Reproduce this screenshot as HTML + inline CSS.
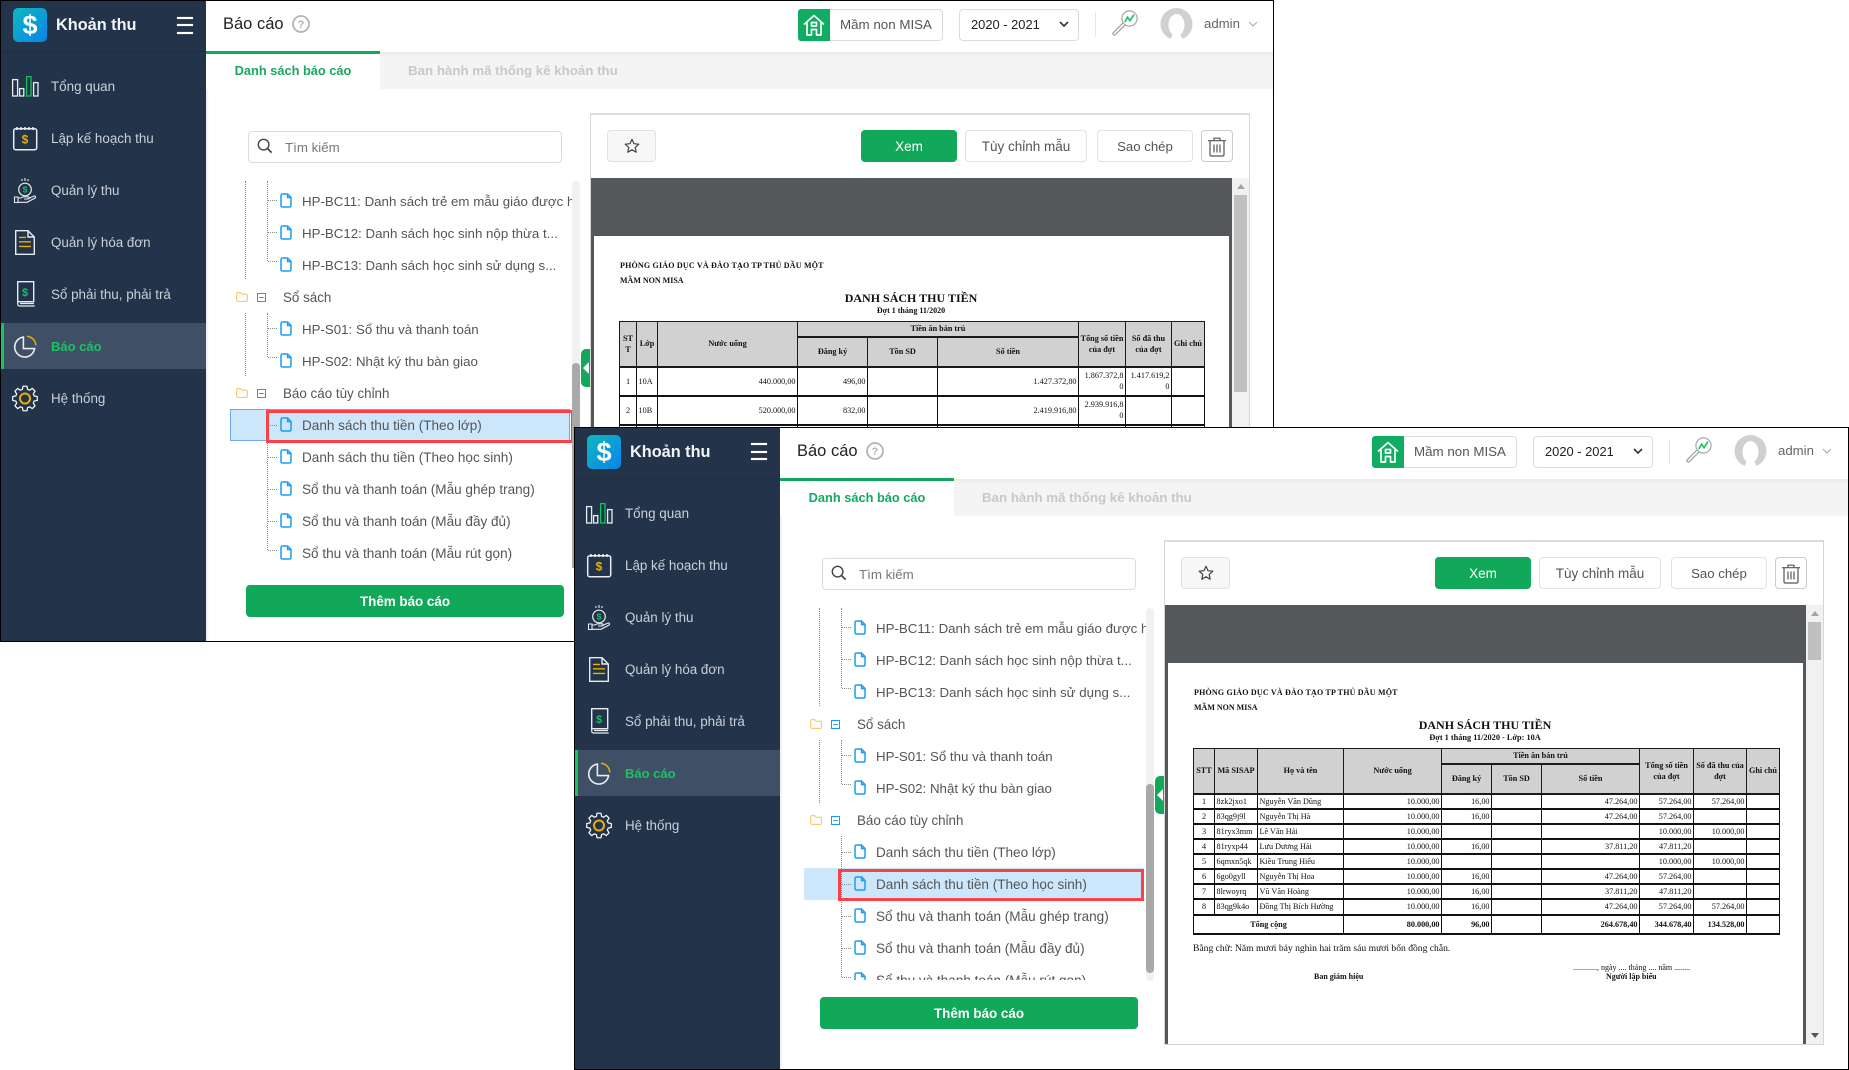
<!DOCTYPE html>
<html lang="vi">
<head>
<meta charset="utf-8">
<title>Báo cáo</title>
<style>
html,body{margin:0;padding:0;background:#fff;width:1849px;height:1070px;overflow:hidden}
body{position:relative;font-family:"Liberation Sans","Noto Sans CJK SC",sans-serif;color:#555}
.win{position:absolute;background:#fff;overflow:hidden}
.win *{box-sizing:border-box}
.frame{position:absolute;left:0;top:0;right:0;bottom:0;border:1px solid #000;z-index:50;pointer-events:none}
.abs{position:absolute}
.t{position:absolute;white-space:nowrap;line-height:20px;height:20px}
.side{position:absolute;left:1px;top:1px;width:205px;bottom:0;background:#23344a}
.sideh{position:absolute;left:1px;top:51px;width:205px;height:1px;background:#1f2e42}
.act{position:absolute;left:1px;top:323px;width:205px;height:46px;background:#3f4f66;border-left:3px solid #14c65b}
.m{left:51px;font-size:13.4px;color:#c9d0d8}
.logo{position:absolute;left:13px;top:8px;width:34px;height:34px;border-radius:5px;background:linear-gradient(135deg,#0db8c0,#0a84ea);color:#fff;font:bold 27px/34px "Liberation Sans",sans-serif;text-align:center}
.ham{position:absolute;left:177px;width:16px;height:2px;background:#fff;box-shadow:0 0 .6px #fff}
.tab2{position:absolute;left:380px;top:52px;right:1px;height:37px;background:#f4f4f4}
.shadow{position:absolute;left:206px;top:52px;right:1px;height:4px;background:linear-gradient(#e9e9e9,rgba(240,240,240,0))}
.sshadow{position:absolute;left:206px;top:52px;width:3px;bottom:0;background:linear-gradient(90deg,#ececec,rgba(255,255,255,0))}
.box{position:absolute;border:1px solid #dcdcdc;border-radius:4px;background:#fff}
.btn{position:absolute;border:1px solid #e2e2e2;border-radius:4px;background:#fff;text-align:center;font-size:13.5px;line-height:31px;color:#555;top:130px;height:32px}
.tree{position:absolute;left:0;top:0;width:572px;overflow:hidden}
.r{left:302px;font-size:13.55px;color:#555;margin-top:1px}
.rh{font-size:13.3px}
.g{left:283px;font-size:13.4px;color:#555;margin-top:1px}
.dv{position:absolute;width:0;border-left:1px dotted #8a8a8a}
.dh{position:absolute;left:268px;width:9px;height:0;border-top:1px dotted #8a8a8a}
.sbt{position:absolute;left:572px;top:181px;width:8px;background:#f1f1f1;border-radius:4px}
.sbh{position:absolute;left:572px;width:8px;background:#a9a9a9;border-radius:4px 4px 0 0}
.handle{position:absolute;left:581px;top:349px;width:9px;height:38px;background:#12a85a;border-radius:5px 0 0 5px}
.handle:after{content:"";position:absolute;left:2px;top:13px;border:6px solid transparent;border-left:0;border-right:6px solid #fff}
.panel{position:absolute;left:590px;top:113px;width:660px;height:505px;border:1px solid #d6d6d6;border-top-width:2px;border-top-color:#dcdcdc}
.dark{position:absolute;left:591px;top:178px;width:641px;height:439px;background:#54585b}
.page{position:absolute;left:594px;top:236px;width:635px;height:381px;background:#fff}
.sb{position:absolute;left:1232px;top:178px;width:17px;height:439px;background:#f1f1f1}
.th{position:absolute;left:1234px;width:13px;background:#c0c0c0;top:195px}
.up{position:absolute;left:1237px;top:184px;border:4px solid transparent;border-top:0;border-bottom:5px solid #a3a3a3}
.dn{position:absolute;left:1237px;top:606px;border:4px solid transparent;border-bottom:0;border-top:5px solid #555}
.rep{font-family:"Liberation Serif","Noto Serif CJK SC",serif;color:#111}
.rp{position:absolute;white-space:nowrap;font:bold 8px/12px "Liberation Serif","Noto Serif CJK SC",serif;color:#111;filter:blur(.2px)}
table.rt{position:absolute;left:619px;top:321px;border-collapse:collapse;table-layout:fixed;font:8.2px/11px "Liberation Serif","Noto Serif CJK SC",serif;color:#111;filter:blur(.2px)}
table.rt td{border:1px solid #111;padding:0 1.5px;overflow:hidden;white-space:nowrap}
table.rt tr.h td,table.rt td.h{background:#d1d1d1;font-weight:bold;text-align:center;border-color:#1b1b1b}
table.rt tr td{border-bottom-width:2px}
.c{text-align:center}.n{text-align:right}.b{font-weight:bold}
</style>
</head>
<body>
<svg width="0" height="0" style="position:absolute">
<defs>
<symbol id="doc" viewBox="0 0 12 15"><path d="M1 2.4C1 1.6 1.6 1 2.4 1H7.6L11 4.6V12.6C11 13.4 10.4 14 9.6 14H2.4C1.6 14 1 13.4 1 12.6Z M7.6 1V4.6H11" fill="none" stroke="#1e9cf0" stroke-width="1.5"/></symbol>
<symbol id="fold" viewBox="0 0 12 10"><path d="M.6 2C.6 1.2 1.2.6 2 .6H4.6L5.8 2.2H10C10.8 2.2 11.4 2.8 11.4 3.6V8C11.4 8.8 10.8 9.4 10 9.4H2C1.2 9.4.6 8.8.6 8Z" fill="none" stroke="#fbc964" stroke-width="1.1"/></symbol>
<symbol id="minus" viewBox="0 0 9 9"><rect x=".5" y=".5" width="8" height="8" fill="none" stroke="#1e9cf0"/><path d="M2.2 4.5H6.8" stroke="#1e9cf0"/></symbol>
<symbol id="gearT" viewBox="-14 -14 28 28"><path d="M-3.64-8.78L-2.6-9.1L-1.96-12.3H1.96L2.6-9.1L3.64-8.78" fill="none" stroke="#fff" stroke-width="1.2" stroke-linejoin="round"/></symbol>
<symbol id="menu" viewBox="0 0 60 430">
<g fill="none" stroke="#e8ecf0" stroke-width="1.3">
<rect x="12.6" y="79.6" width="5" height="16.4"/><rect x="19.6" y="88.6" width="4.2" height="7.4"/><rect x="33.6" y="82.6" width="4.4" height="13.4"/>
<rect x="26.6" y="76.6" width="4.4" height="19.4" stroke="#16c060"/>
<rect x="13.7" y="128.7" width="23" height="21" rx="2" stroke-width="1.5"/>
<path d="M17 127v3M21 127v3M25 127v3M29 127v3M33 127v3" stroke-width="1.6"/>
<circle cx="25" cy="189.5" r="6.3" stroke-width="1.2"/>
<path d="M25 178v3M22 179v2M28 179v2" stroke-width="1.1"/>
<path d="M14.5 197v5.5h3.5V197ZM18 198h2.5l3-1.2h4.5c1.5 0 1.5 2.2 0 2.2h-4M27.5 199l6-2.8c2-.8 2.8 1 1.2 2.1l-7.7 4h-9" stroke-width="1.1"/>
<path d="M15.7 230.7H28L34.3 237V254.3H15.7ZM28 230.7V237H34.3" stroke-width="1.4"/>
<rect x="17.7" y="281.7" width="16" height="20" stroke-width="1.4"/>
<path d="M17.7 301.7V304C17.7 305.2 18.5 306 19.7 306H34.7M20 303.5H34" stroke-width="1.2"/>
<path d="M23.4 337.1A10 10 0 1 0 34.6 348.6H23.4Z" stroke-width="1.6"/>
</g>
<g fill="none" stroke="#e9b000" stroke-width="1.4">
<path d="M19 237.4H26M19 241.8H31M19 246.4H31"/>
<path d="M27 336.2A9.6 9.6 0 0 1 35.8 345.4" stroke-width="1.5"/>
<circle cx="25" cy="398.5" r="5" stroke-width="2"/>
</g>
<text x="25" y="143.5" font-family="Liberation Sans" font-weight="bold" font-size="12" fill="#e9b000" text-anchor="middle">$</text>
<text x="25" y="192.4" font-family="Liberation Sans" font-weight="bold" font-size="8.5" fill="#16c060" text-anchor="middle">$</text>
<text x="25" y="296" font-family="Liberation Sans" font-weight="bold" font-size="11" fill="#16c060" text-anchor="middle">$</text>
<g transform="translate(25 398.5)">
<use href="#gearT" x="-14" y="-14" width="28" height="28"/>
<use href="#gearT" x="-14" y="-14" width="28" height="28" transform="rotate(45)"/>
<use href="#gearT" x="-14" y="-14" width="28" height="28" transform="rotate(90)"/>
<use href="#gearT" x="-14" y="-14" width="28" height="28" transform="rotate(135)"/>
<use href="#gearT" x="-14" y="-14" width="28" height="28" transform="rotate(180)"/>
<use href="#gearT" x="-14" y="-14" width="28" height="28" transform="rotate(225)"/>
<use href="#gearT" x="-14" y="-14" width="28" height="28" transform="rotate(270)"/>
<use href="#gearT" x="-14" y="-14" width="28" height="28" transform="rotate(315)"/>
</g>
</symbol>
<symbol id="home" viewBox="0 0 32 32"><path d="M6 15.5L16 6.5L26 15.5M9 13.5V26H13.5V20.5H18.5V26H23V13.5M13.5 13.5H18.5V17H13.5Z" fill="none" stroke="#fff" stroke-width="1.7" stroke-linejoin="round"/></symbol>
<symbol id="mag" viewBox="0 0 26 26"><path d="M2.4 23.6L11.6 14.4" stroke="#9a9a9a" stroke-width="4" stroke-linecap="round"/><path d="M2.4 23.6L11.6 14.4" stroke="#fff" stroke-width="1.8" stroke-linecap="round"/><circle cx="17.5" cy="8.5" r="7.6" fill="#fff" stroke="#a5a5a5" stroke-width="1.2"/><path d="M12.8 12L15.6 7.2L18 10.6L22 4.6" fill="none" stroke="#22c268" stroke-width="1.7"/></symbol>
<symbol id="ava" viewBox="0 0 33 32"><circle cx="16.5" cy="16" r="16" fill="#d0d0d0"/><ellipse cx="16.5" cy="17" rx="8" ry="11" fill="#fff"/><path d="M10 32L14 24H19L23 32Z" fill="#fff"/></symbol>
<symbol id="star" viewBox="0 0 16 16"><path d="M8 1.3L10 5.7L14.8 6.2L11.2 9.4L12.2 14.2L8 11.8L3.8 14.2L4.8 9.4L1.2 6.2L6 5.7Z" fill="none" stroke="#444" stroke-width="1.2" stroke-linejoin="round"/></symbol>
<symbol id="trash" viewBox="0 0 20 20"><path d="M1 3.7H19M7 3.5V1.2H13V3.5M3 4V17.5C3 18.5 3.6 19 4.5 19H15.5C16.4 19 17 18.5 17 17.5V4M7 7.5V15.5M10 7.5V15.5M13 7.5V15.5" fill="none" stroke="#555" stroke-width="1.2"/></symbol>
<symbol id="sr" viewBox="0 0 16 16"><circle cx="6.6" cy="6.6" r="5.3" fill="none" stroke="#444" stroke-width="1.4"/><path d="M10.6 10.6L14.6 14.6" stroke="#444" stroke-width="1.7"/></symbol>
</defs>
</svg>

<!-- WINDOW 1 -->
<div class="win" style="left:0;top:0;width:1274px;height:642px;z-index:1">
<div class="side"></div><div class="sideh"></div><div class="act"></div>
<div class="logo">$</div>
<div class="t" style="left:56px;top:15px;font-size:16.3px;font-weight:bold;color:#f2f5f8">Khoản thu</div>
<div class="ham" style="top:17px"></div><div class="ham" style="top:24px"></div><div class="ham" style="top:32px"></div>
<svg class="abs" style="left:0;top:0" width="60" height="430"><use href="#menu" width="60" height="430"/></svg>
<div class="t m" style="top:77px">Tổng quan</div>
<div class="t m" style="top:129px">Lập kế hoạch thu</div>
<div class="t m" style="top:181px">Quản lý thu</div>
<div class="t m" style="top:233px">Quản lý hóa đơn</div>
<div class="t m" style="top:285px">Sổ phải thu, phải trả</div>
<div class="t m" style="top:337px;color:#18c464;font-weight:bold;font-size:13px">Báo cáo</div>
<div class="t m" style="top:389px">Hệ thống</div>

<div class="tab2"></div><div class="shadow"></div><div class="sshadow"></div>
<div class="abs" style="left:206px;top:51px;width:174px;height:3px;background:#12a85a"></div>
<div class="abs" style="left:206px;top:54px;width:174px;height:35px;background:#fff"></div>
<div class="t" style="left:223px;top:14px;font-size:16.5px;color:#222">Báo cáo</div>
<svg class="abs" style="left:292px;top:15px" width="18" height="18"><circle cx="9" cy="9" r="8" fill="none" stroke="#b4b4b4" stroke-width="1.8"/><text x="9" y="13" font-family="Liberation Sans" font-weight="bold" font-size="11" fill="#b4b4b4" text-anchor="middle">?</text></svg>
<div class="t" style="left:234px;top:61px;width:118px;text-align:center;font-size:12.8px;font-weight:bold;color:#16a860">Danh sách báo cáo</div>
<div class="t" style="left:408px;top:61px;font-size:13.3px;font-weight:bold;color:#c8c8c8">Ban hành mã thống kê khoản thu</div>

<div class="box" style="left:798px;top:9px;width:145px;height:32px"></div>
<div class="abs" style="left:798px;top:9px;width:32px;height:32px;background:#0fac62;border-radius:3px 0 0 3px"></div>
<svg class="abs" style="left:798px;top:9px" width="32" height="32"><use href="#home" width="32" height="32"/></svg>
<div class="t" style="left:840px;top:15px;font-size:13.35px;color:#555">Mầm non MISA</div>
<div class="box" style="left:959px;top:9px;width:120px;height:32px"></div>
<div class="t" style="left:971px;top:15px;font-size:12.9px;color:#222">2020 - 2021</div>
<svg class="abs" style="left:1059px;top:21px" width="10" height="7"><path d="M1 1L5 5L9 1" fill="none" stroke="#333" stroke-width="1.6"/></svg>
<div class="abs" style="left:1095px;top:12px;width:1px;height:25px;background:#e6e6e6"></div>
<svg class="abs" style="left:1112px;top:10px" width="26" height="26"><use href="#mag" width="26" height="26"/></svg>
<svg class="abs" style="left:1160px;top:8px" width="33" height="32"><use href="#ava" width="33" height="32"/></svg>
<div class="t" style="left:1204px;top:14px;font-size:13.2px;color:#666">admin</div>
<svg class="abs" style="left:1248px;top:21px" width="10" height="7"><path d="M1 1L5 5L9 1" fill="none" stroke="#aaa" stroke-width="1.1"/></svg>

<div class="box" style="left:248px;top:131px;width:314px;height:32px"></div>
<svg class="abs" style="left:257px;top:138px" width="16" height="16"><use href="#sr" width="16" height="16"/></svg>
<div class="t" style="left:285px;top:138px;font-size:13.3px;color:#777">Tìm kiếm</div>

<div class="abs" style="left:230px;top:409px;width:340px;height:32px;background:#cce6fc;border:1px solid #6fa8e6"></div>
<div class="tree" style="height:570px">
<div class="dv" style="left:245px;top:181px;height:98px"></div>
<div class="dv" style="left:267px;top:181px;height:80px"></div>
<div class="dv" style="left:245px;top:313px;height:63px"></div>
<div class="dv" style="left:267px;top:313px;height:44px"></div>
<div class="dv" style="left:267px;top:409px;height:141px"></div>
<div class="dh" style="top:200px"></div><div class="dh" style="top:232px"></div><div class="dh" style="top:261px"></div>
<div class="dh" style="top:328px"></div><div class="dh" style="top:357px"></div>
<div class="dh" style="top:425px"></div><div class="dh" style="top:457px"></div><div class="dh" style="top:489px"></div><div class="dh" style="top:521px"></div><div class="dh" style="top:550px"></div>
<svg class="abs" style="left:280px;top:193px" width="12" height="15"><use href="#doc" width="12" height="15"/></svg><div class="t r rh" style="top:191px">HP-BC11: Danh sách trẻ em mẫu giáo được hưởng</div>
<svg class="abs" style="left:280px;top:225px" width="12" height="15"><use href="#doc" width="12" height="15"/></svg><div class="t r rh" style="top:223px">HP-BC12: Danh sách học sinh nộp thừa t...</div>
<svg class="abs" style="left:280px;top:257px" width="12" height="15"><use href="#doc" width="12" height="15"/></svg><div class="t r rh" style="top:255px">HP-BC13: Danh sách học sinh sử dụng s...</div>
<svg class="abs" style="left:236px;top:292px" width="12" height="10"><use href="#fold" width="12" height="10"/></svg><svg class="abs" style="left:257px;top:293px" width="9" height="9"><use href="#minus" width="9" height="9"/></svg><div class="t g" style="top:287px">Sổ sách</div>
<svg class="abs" style="left:280px;top:321px" width="12" height="15"><use href="#doc" width="12" height="15"/></svg><div class="t r rh" style="top:319px">HP-S01: Sổ thu và thanh toán</div>
<svg class="abs" style="left:280px;top:353px" width="12" height="15"><use href="#doc" width="12" height="15"/></svg><div class="t r rh" style="top:351px">HP-S02: Nhật ký thu bàn giao</div>
<svg class="abs" style="left:236px;top:388px" width="12" height="10"><use href="#fold" width="12" height="10"/></svg><svg class="abs" style="left:257px;top:389px" width="9" height="9"><use href="#minus" width="9" height="9"/></svg><div class="t g" style="top:383px">Báo cáo tùy chỉnh</div>
<svg class="abs" style="left:280px;top:417px" width="12" height="15"><use href="#doc" width="12" height="15"/></svg><div class="t r" style="top:415px">Danh sách thu tiền (Theo lớp)</div>
<svg class="abs" style="left:280px;top:449px" width="12" height="15"><use href="#doc" width="12" height="15"/></svg><div class="t r" style="top:447px">Danh sách thu tiền (Theo học sinh)</div>
<svg class="abs" style="left:280px;top:481px" width="12" height="15"><use href="#doc" width="12" height="15"/></svg><div class="t r" style="top:479px">Sổ thu và thanh toán (Mẫu ghép trang)</div>
<svg class="abs" style="left:280px;top:513px" width="12" height="15"><use href="#doc" width="12" height="15"/></svg><div class="t r" style="top:511px">Sổ thu và thanh toán (Mẫu đầy đủ)</div>
<svg class="abs" style="left:280px;top:545px" width="12" height="15"><use href="#doc" width="12" height="15"/></svg><div class="t r" style="top:543px">Sổ thu và thanh toán (Mẫu rút gọn)</div>
</div>
<div class="abs" style="left:266px;top:410px;width:308px;height:33px;border:3px solid #fb4048"></div>
<div class="sbt" style="height:389px"></div><div class="sbh" style="top:363px;height:205px"></div>
<div class="handle"></div>
<div class="abs" style="left:246px;top:585px;width:318px;height:32px;background:#12a85a;border-radius:4px;text-align:center;font:bold 13.4px/34px 'Liberation Sans',sans-serif;color:#fff">Thêm báo cáo</div>

<div class="panel"></div>
<div class="btn" style="left:607px;width:49px;background:#f7f7f7"></div>
<svg class="abs" style="left:624px;top:138px" width="16" height="16"><use href="#star" width="16" height="16"/></svg>
<div class="btn" style="left:861px;width:96px;background:#12a85a;border-color:#12a85a;color:#fff">Xem</div>
<div class="btn" style="left:965px;width:122px">Tùy chỉnh mẫu</div>
<div class="btn" style="left:1097px;width:96px;font-size:13.2px">Sao chép</div>
<div class="btn" style="left:1201px;width:32px;border-color:#ccc"></div>
<svg class="abs" style="left:1207px;top:137px" width="20" height="20"><use href="#trash" width="20" height="20"/></svg>

<div class="dark"></div><div class="page"></div>
<div class="sb"></div><div class="th" style="height:197px"></div><div class="up"></div><div class="dn"></div>
<div class="rp" style="left:620px;top:260px;letter-spacing:.2px">PHÒNG GIÁO DỤC VÀ ĐÀO TẠO TP THỦ DẦU MỘT</div>
<div class="rp" style="left:620px;top:275px">MẦM NON MISA</div>
<div class="rp" style="left:811px;top:290px;width:200px;text-align:center;font-size:12px;line-height:16px">DANH SÁCH THU TIỀN</div>
<div class="rp" style="left:811px;top:305px;width:200px;text-align:center">Đợt 1 tháng 11/2020</div>
<table class="rt" style="width:585px">
<colgroup><col style="width:17px"><col style="width:21px"><col style="width:140px"><col style="width:70px"><col style="width:70px"><col style="width:141px"><col style="width:47px"><col style="width:46px"><col style="width:33px"></colgroup>
<tr class="h" style="height:15px"><td rowspan="2">ST<br>T</td><td rowspan="2">Lớp</td><td rowspan="2">Nước uống</td><td colspan="3">Tiền ăn bán trú</td><td rowspan="2">Tổng số tiền<br>của đợt</td><td rowspan="2">Số đã thu<br>của đợt</td><td rowspan="2">Ghi chú</td></tr>
<tr class="h" style="height:30px"><td>Đăng ký</td><td>Tồn SD</td><td>Số tiền</td></tr>
<tr style="height:29px"><td class="c">1</td><td>10A</td><td class="n">440.000,00</td><td class="n">496,00</td><td></td><td class="n">1.427.372,80</td><td class="n">1.867.372,8<br>0</td><td class="n">1.417.619,2<br>0</td><td></td></tr>
<tr style="height:29px"><td class="c">2</td><td>10B</td><td class="n">520.000,00</td><td class="n">832,00</td><td></td><td class="n">2.419.916,80</td><td class="n">2.939.916,8<br>0</td><td></td><td></td></tr>
<tr style="height:29px"><td class="c">3</td><td>10C</td><td class="n"></td><td class="n"></td><td></td><td class="n"></td><td></td><td></td><td></td></tr>
</table>
<div class="frame"></div>
</div>

<!-- WINDOW 2 -->
<div class="win" style="left:574px;top:427px;width:1275px;height:643px;z-index:10">
<div class="side"></div><div class="sideh"></div><div class="act"></div>
<div class="logo">$</div>
<div class="t" style="left:56px;top:15px;font-size:16.3px;font-weight:bold;color:#f2f5f8">Khoản thu</div>
<div class="ham" style="top:16px"></div><div class="ham" style="top:24px"></div><div class="ham" style="top:31px"></div>
<svg class="abs" style="left:0;top:0" width="60" height="430"><use href="#menu" width="60" height="430"/></svg>
<div class="t m" style="top:77px">Tổng quan</div>
<div class="t m" style="top:129px">Lập kế hoạch thu</div>
<div class="t m" style="top:181px">Quản lý thu</div>
<div class="t m" style="top:233px">Quản lý hóa đơn</div>
<div class="t m" style="top:285px">Sổ phải thu, phải trả</div>
<div class="t m" style="top:337px;color:#18c464;font-weight:bold;font-size:13px">Báo cáo</div>
<div class="t m" style="top:389px">Hệ thống</div>

<div class="tab2"></div><div class="shadow"></div><div class="sshadow"></div>
<div class="abs" style="left:206px;top:51px;width:174px;height:3px;background:#12a85a"></div>
<div class="abs" style="left:206px;top:54px;width:174px;height:35px;background:#fff"></div>
<div class="t" style="left:223px;top:14px;font-size:16.5px;color:#222">Báo cáo</div>
<svg class="abs" style="left:292px;top:15px" width="18" height="18"><circle cx="9" cy="9" r="8" fill="none" stroke="#b4b4b4" stroke-width="1.8"/><text x="9" y="13" font-family="Liberation Sans" font-weight="bold" font-size="11" fill="#b4b4b4" text-anchor="middle">?</text></svg>
<div class="t" style="left:234px;top:61px;width:118px;text-align:center;font-size:12.8px;font-weight:bold;color:#16a860">Danh sách báo cáo</div>
<div class="t" style="left:408px;top:61px;font-size:13.3px;font-weight:bold;color:#c8c8c8">Ban hành mã thống kê khoản thu</div>

<div class="box" style="left:798px;top:9px;width:145px;height:32px"></div>
<div class="abs" style="left:798px;top:9px;width:32px;height:32px;background:#0fac62;border-radius:3px 0 0 3px"></div>
<svg class="abs" style="left:798px;top:9px" width="32" height="32"><use href="#home" width="32" height="32"/></svg>
<div class="t" style="left:840px;top:15px;font-size:13.35px;color:#555">Mầm non MISA</div>
<div class="box" style="left:959px;top:9px;width:120px;height:32px"></div>
<div class="t" style="left:971px;top:15px;font-size:12.9px;color:#222">2020 - 2021</div>
<svg class="abs" style="left:1059px;top:21px" width="10" height="7"><path d="M1 1L5 5L9 1" fill="none" stroke="#333" stroke-width="1.6"/></svg>
<div class="abs" style="left:1095px;top:12px;width:1px;height:25px;background:#e6e6e6"></div>
<svg class="abs" style="left:1112px;top:10px" width="26" height="26"><use href="#mag" width="26" height="26"/></svg>
<svg class="abs" style="left:1160px;top:8px" width="33" height="32"><use href="#ava" width="33" height="32"/></svg>
<div class="t" style="left:1204px;top:14px;font-size:13.2px;color:#666">admin</div>
<svg class="abs" style="left:1248px;top:21px" width="10" height="7"><path d="M1 1L5 5L9 1" fill="none" stroke="#aaa" stroke-width="1.1"/></svg>

<div class="box" style="left:248px;top:131px;width:314px;height:32px"></div>
<svg class="abs" style="left:257px;top:138px" width="16" height="16"><use href="#sr" width="16" height="16"/></svg>
<div class="t" style="left:285px;top:138px;font-size:13.3px;color:#777">Tìm kiếm</div>

<div class="abs" style="left:230px;top:441px;width:340px;height:32px;background:#cce6fc"></div>
<div class="tree" style="height:553px">
<div class="dv" style="left:245px;top:181px;height:98px"></div>
<div class="dv" style="left:267px;top:181px;height:80px"></div>
<div class="dv" style="left:245px;top:313px;height:63px"></div>
<div class="dv" style="left:267px;top:313px;height:44px"></div>
<div class="dv" style="left:267px;top:409px;height:141px"></div>
<div class="dh" style="top:200px"></div><div class="dh" style="top:232px"></div><div class="dh" style="top:261px"></div>
<div class="dh" style="top:328px"></div><div class="dh" style="top:357px"></div>
<div class="dh" style="top:425px"></div><div class="dh" style="top:457px"></div><div class="dh" style="top:489px"></div><div class="dh" style="top:521px"></div><div class="dh" style="top:550px"></div>
<svg class="abs" style="left:280px;top:193px" width="12" height="15"><use href="#doc" width="12" height="15"/></svg><div class="t r rh" style="top:191px">HP-BC11: Danh sách trẻ em mẫu giáo được hưởng</div>
<svg class="abs" style="left:280px;top:225px" width="12" height="15"><use href="#doc" width="12" height="15"/></svg><div class="t r rh" style="top:223px">HP-BC12: Danh sách học sinh nộp thừa t...</div>
<svg class="abs" style="left:280px;top:257px" width="12" height="15"><use href="#doc" width="12" height="15"/></svg><div class="t r rh" style="top:255px">HP-BC13: Danh sách học sinh sử dụng s...</div>
<svg class="abs" style="left:236px;top:292px" width="12" height="10"><use href="#fold" width="12" height="10"/></svg><svg class="abs" style="left:257px;top:293px" width="9" height="9"><use href="#minus" width="9" height="9"/></svg><div class="t g" style="top:287px">Sổ sách</div>
<svg class="abs" style="left:280px;top:321px" width="12" height="15"><use href="#doc" width="12" height="15"/></svg><div class="t r rh" style="top:319px">HP-S01: Sổ thu và thanh toán</div>
<svg class="abs" style="left:280px;top:353px" width="12" height="15"><use href="#doc" width="12" height="15"/></svg><div class="t r rh" style="top:351px">HP-S02: Nhật ký thu bàn giao</div>
<svg class="abs" style="left:236px;top:388px" width="12" height="10"><use href="#fold" width="12" height="10"/></svg><svg class="abs" style="left:257px;top:389px" width="9" height="9"><use href="#minus" width="9" height="9"/></svg><div class="t g" style="top:383px">Báo cáo tùy chỉnh</div>
<svg class="abs" style="left:280px;top:417px" width="12" height="15"><use href="#doc" width="12" height="15"/></svg><div class="t r" style="top:415px">Danh sách thu tiền (Theo lớp)</div>
<svg class="abs" style="left:280px;top:449px" width="12" height="15"><use href="#doc" width="12" height="15"/></svg><div class="t r" style="top:447px">Danh sách thu tiền (Theo học sinh)</div>
<svg class="abs" style="left:280px;top:481px" width="12" height="15"><use href="#doc" width="12" height="15"/></svg><div class="t r" style="top:479px">Sổ thu và thanh toán (Mẫu ghép trang)</div>
<svg class="abs" style="left:280px;top:513px" width="12" height="15"><use href="#doc" width="12" height="15"/></svg><div class="t r" style="top:511px">Sổ thu và thanh toán (Mẫu đầy đủ)</div>
<svg class="abs" style="left:280px;top:545px" width="12" height="15"><use href="#doc" width="12" height="15"/></svg><div class="t r" style="top:543px">Sổ thu và thanh toán (Mẫu rút gọn)</div>
</div>
<div class="abs" style="left:264px;top:442px;width:306px;height:32px;border:3px solid #fb4048"></div>
<div class="sbt" style="height:373px"></div><div class="sbh" style="top:357px;height:189px;border-radius:4px"></div>
<div class="handle"></div>
<div class="abs" style="left:246px;top:570px;width:318px;height:32px;background:#12a85a;border-radius:4px;text-align:center;font:bold 13.4px/33px 'Liberation Sans',sans-serif;color:#fff">Thêm báo cáo</div>

<div class="panel"></div>
<div class="btn" style="left:607px;width:49px;background:#f7f7f7"></div>
<svg class="abs" style="left:624px;top:138px" width="16" height="16"><use href="#star" width="16" height="16"/></svg>
<div class="btn" style="left:861px;width:96px;background:#12a85a;border-color:#12a85a;color:#fff">Xem</div>
<div class="btn" style="left:965px;width:122px">Tùy chỉnh mẫu</div>
<div class="btn" style="left:1097px;width:96px;font-size:13.2px">Sao chép</div>
<div class="btn" style="left:1201px;width:32px;border-color:#ccc"></div>
<svg class="abs" style="left:1207px;top:137px" width="20" height="20"><use href="#trash" width="20" height="20"/></svg>

<div class="dark"></div><div class="page"></div>
<div class="sb"></div><div class="th" style="height:38px"></div><div class="up"></div><div class="dn"></div>
<div class="rp" style="left:620px;top:260px;letter-spacing:.2px">PHÒNG GIÁO DỤC VÀ ĐÀO TẠO TP THỦ DẦU MỘT</div>
<div class="rp" style="left:620px;top:275px">MẦM NON MISA</div>
<div class="rp" style="left:811px;top:290px;width:200px;text-align:center;font-size:12px;line-height:16px">DANH SÁCH THU TIỀN</div>
<div class="rp" style="left:811px;top:305px;width:200px;text-align:center;font-size:8.3px">Đợt 1 tháng 11/2020 - Lớp: 10A</div>
<table class="rt" style="width:586px">
<colgroup><col style="width:21px"><col style="width:43px"><col style="width:86px"><col style="width:98px"><col style="width:50px"><col style="width:50px"><col style="width:98px"><col style="width:54px"><col style="width:53px"><col style="width:33px"></colgroup>
<tr class="h" style="height:15px"><td rowspan="2">STT</td><td rowspan="2">Mã SISAP</td><td rowspan="2">Họ và tên</td><td rowspan="2">Nước uống</td><td colspan="3">Tiền ăn bán trú</td><td rowspan="2">Tổng số tiền<br>của đợt</td><td rowspan="2">Số đã thu của<br>đợt</td><td rowspan="2">Ghi chú</td></tr>
<tr class="h" style="height:30px"><td>Đăng ký</td><td>Tồn SD</td><td>Số tiền</td></tr>
<tr style="height:15px"><td class="c">1</td><td>8zk2jxo1</td><td>Nguyễn Văn Dũng</td><td class="n">10.000,00</td><td class="n">16,00</td><td></td><td class="n">47.264,00</td><td class="n">57.264,00</td><td class="n">57.264,00</td><td></td></tr>
<tr style="height:15px"><td class="c">2</td><td>83qg9j9l</td><td>Nguyễn Thị Hà</td><td class="n">10.000,00</td><td class="n">16,00</td><td></td><td class="n">47.264,00</td><td class="n">57.264,00</td><td></td><td></td></tr>
<tr style="height:15px"><td class="c">3</td><td>81ryx3mm</td><td>Lê Văn Hải</td><td class="n">10.000,00</td><td></td><td></td><td></td><td class="n">10.000,00</td><td class="n">10.000,00</td><td></td></tr>
<tr style="height:15px"><td class="c">4</td><td>81ryxp44</td><td>Lưu Dương Hải</td><td class="n">10.000,00</td><td class="n">16,00</td><td></td><td class="n">37.811,20</td><td class="n">47.811,20</td><td></td><td></td></tr>
<tr style="height:15px"><td class="c">5</td><td>6qmxn5qk</td><td>Kiều Trung Hiếu</td><td class="n">10.000,00</td><td></td><td></td><td></td><td class="n">10.000,00</td><td class="n">10.000,00</td><td></td></tr>
<tr style="height:15px"><td class="c">6</td><td>6go0gyll</td><td>Nguyễn Thị Hoa</td><td class="n">10.000,00</td><td class="n">16,00</td><td></td><td class="n">47.264,00</td><td class="n">57.264,00</td><td></td><td></td></tr>
<tr style="height:15px"><td class="c">7</td><td>8lrwoyrq</td><td>Vũ Văn Hoàng</td><td class="n">10.000,00</td><td class="n">16,00</td><td></td><td class="n">37.811,20</td><td class="n">47.811,20</td><td></td><td></td></tr>
<tr style="height:16px"><td class="c">8</td><td>83qg9k4o</td><td>Đồng Thị Bích Hường</td><td class="n">10.000,00</td><td class="n">16,00</td><td></td><td class="n">47.264,00</td><td class="n">57.264,00</td><td class="n">57.264,00</td><td></td></tr>
<tr style="height:19px" class="b"><td colspan="3" class="c">Tổng cộng</td><td class="n">80.000,00</td><td class="n">96,00</td><td></td><td class="n">264.678,40</td><td class="n">344.678,40</td><td class="n">134.528,00</td><td></td></tr>
</table>
<div class="abs rep" style="left:619px;top:516px;font-size:9.6px;line-height:12px;white-space:nowrap;filter:blur(.2px)">Bằng chữ: Năm mươi bảy nghìn hai trăm sáu mươi bốn đồng chẵn.</div>
<div class="abs rep" style="left:999px;top:535px;font-size:8px;line-height:12px;white-space:nowrap;filter:blur(.2px)">............, ngày .... tháng .... năm ........</div>
<div class="abs rep b" style="left:1032px;top:544px;font-size:8px;line-height:12px;white-space:nowrap;filter:blur(.2px)">Người lập biểu</div>
<div class="abs rep b" style="left:740px;top:544px;font-size:8px;line-height:12px;white-space:nowrap;filter:blur(.2px)">Ban giám hiệu</div>
<div class="frame"></div>
</div>
</body>
</html>
